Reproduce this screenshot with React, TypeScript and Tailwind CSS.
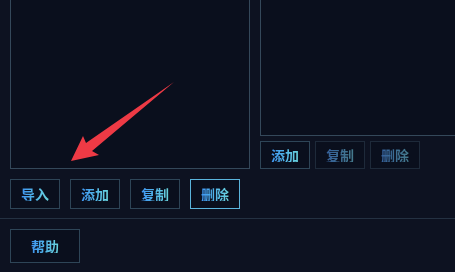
import React from 'react';

const font = { fontFamily: '"Noto Sans CJK SC", "Noto Sans", sans-serif' };

type BtnProps = {
  label: string;
  w?: string;
  h?: string;
  active?: boolean;
  disabled?: boolean;
};

const Btn: React.FC<BtnProps> = ({ label, w = 'w-[50px]', h = 'h-[30px]', active, disabled }) => {
  const border = active
    ? 'border-[#5ab4dc]'
    : disabled
    ? 'border-[#1e2a3a]'
    : 'border-[#2e4557]';
  const text = disabled
    ? 'bg-gradient-to-r from-[#35609a] to-[#457a8c] bg-clip-text text-transparent'
    : 'bg-gradient-to-r from-[#3f95f2] to-[#6ad4dc] bg-clip-text text-transparent';
  return (
    <button
      className={`${w} ${h} shrink-0 border ${border} bg-[#0a0f1d] flex items-center justify-center text-[14px] font-semibold leading-none`}
    >
      <span className={text}>{label}</span>
    </button>
  );
};

export default function App() {
  return (
    <div style={font} className="w-[455px] h-[272px] overflow-hidden bg-[#0d1221]">
      {/* Top: two panels */}
      <div className="flex gap-[10px] pl-[10px] h-[218px]">
        {/* Left panel */}
        <div className="w-[240px] shrink-0 relative">
          <div className="h-[169px] border-x border-b border-[#34485a] bg-[#0a0f1d]" />
          <div className="flex gap-[10px] mt-[10px]">
            <Btn label="导入" />
            <Btn label="添加" />
            <Btn label="复制" />
            <Btn label="删除" active />
          </div>
          {/* annotation arrow */}
          <svg className="absolute left-[-10px] top-0 pointer-events-none" width="260" height="180" viewBox="0 0 260 180">
            <polygon
              points="174,82 92,151 99,155 71,161 83,136 86,143"
              fill="#ee3a45"
            />
          </svg>
        </div>

        {/* Right panel */}
        <div className="w-[220px] shrink-0">
          <div className="h-[136px] border-l border-b border-[#34485a] bg-[#0a0f1d]" />
          <div className="flex gap-[5px] mt-[5px]">
            <Btn label="添加" h="h-[28px]" />
            <Btn label="复制" h="h-[28px]" disabled />
            <Btn label="删除" h="h-[28px]" disabled />
          </div>
        </div>
      </div>

      {/* Bottom bar */}
      <div className="border-t border-[#243142] pl-[10px] pt-[10px]">
        <Btn label="帮助" w="w-[70px]" h="h-[34px]" />
      </div>
    </div>
  );
}
